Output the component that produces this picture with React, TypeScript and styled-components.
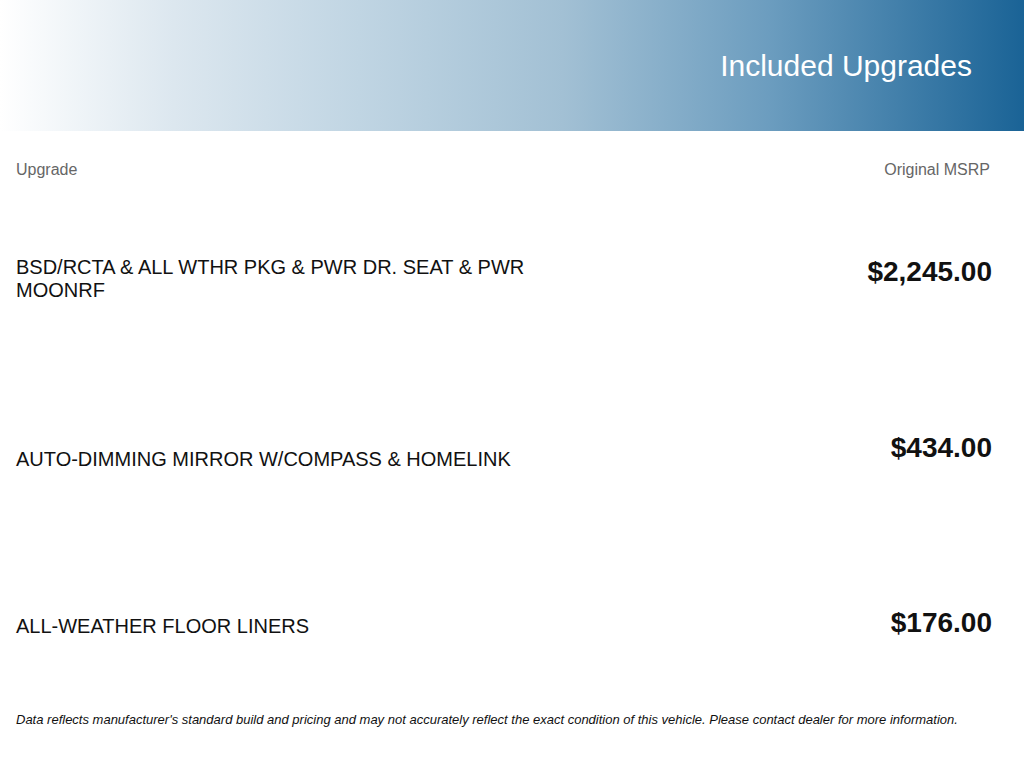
import styled, { createGlobalStyle } from 'styled-components'

interface UpgradeItem {
    name: string
    price: string
    descOffset: number
    priceOffset: number
    height: number
}

const upgrades: UpgradeItem[] = [
    { name: 'BSD/RCTA & ALL WTHR PKG & PWR DR. SEAT & PWR MOONRF', price: '$2,245.00', descOffset: 1, priceOffset: 1, height: 176 },
    { name: 'AUTO-DIMMING MIRROR W/COMPASS & HOMELINK', price: '$434.00', descOffset: 17, priceOffset: 1, height: 176 },
    { name: 'ALL-WEATHER FLOOR LINERS', price: '$176.00', descOffset: 8, priceOffset: 0, height: 105 }
]

const GlobalStyle = createGlobalStyle`
    body {
        margin:0;
        background:#fff;
        font-family:"Liberation Sans", Arial, sans-serif;
    }
`

const Page = styled.div`
    width:1024px;
    min-height:768px;
`

const Banner = styled.header`
    height:131px;
    display:flex;
    align-items:center;
    justify-content:flex-end;
    padding-right:52px;
    background:linear-gradient(to right, #ffffff 0%, #dce7ef 17%, #c0d5e3 35%, #a2c0d4 55%, #6c9dbf 75%, #1a6396 100%);
`

const Title = styled.h1`
    margin:0;
    font-size:30px;
    font-weight:normal;
    color:#fff;
`

const Content = styled.div`
    padding:30px 32px 0 16px;
`

const ColumnHeads = styled.div`
    display:flex;
    justify-content:space-between;
    padding-right:2px;
    font-size:16px;
    line-height:17px;
    color:#666;
    margin-bottom:77px;
`

const Row = styled.div<{ $height: number }>`
    display:flex;
    justify-content:space-between;
    align-items:flex-start;
    height:${({ $height }) => $height}px;
`

const Description = styled.div<{ $offset: number }>`
    max-width:540px;
    margin-top:${({ $offset }) => $offset}px;
    font-size:20px;
    line-height:23px;
    color:#111;
`

const Price = styled.div<{ $offset: number }>`
    margin-top:${({ $offset }) => $offset}px;
    font-size:28px;
    font-weight:bold;
    line-height:32px;
    color:#111;
`

const Disclaimer = styled.p`
    margin:0;
    font-size:13px;
    line-height:15px;
    font-style:italic;
    color:#111;
`

const App = () => {
    return (
        <Page>
            <GlobalStyle />
            <Banner>
                <Title>Included Upgrades</Title>
            </Banner>
            <Content>
                <ColumnHeads>
                    <span>Upgrade</span>
                    <span>Original MSRP</span>
                </ColumnHeads>
                {upgrades.map((item) => (
                    <Row key={item.name} $height={item.height}>
                        <Description $offset={item.descOffset}>{item.name}</Description>
                        <Price $offset={item.priceOffset}>{item.price}</Price>
                    </Row>
                ))}
                <Disclaimer>
                    Data reflects manufacturer's standard build and pricing and may not accurately reflect the exact condition of this vehicle. Please contact dealer for more information.
                </Disclaimer>
            </Content>
        </Page>
    )
}

export default App
